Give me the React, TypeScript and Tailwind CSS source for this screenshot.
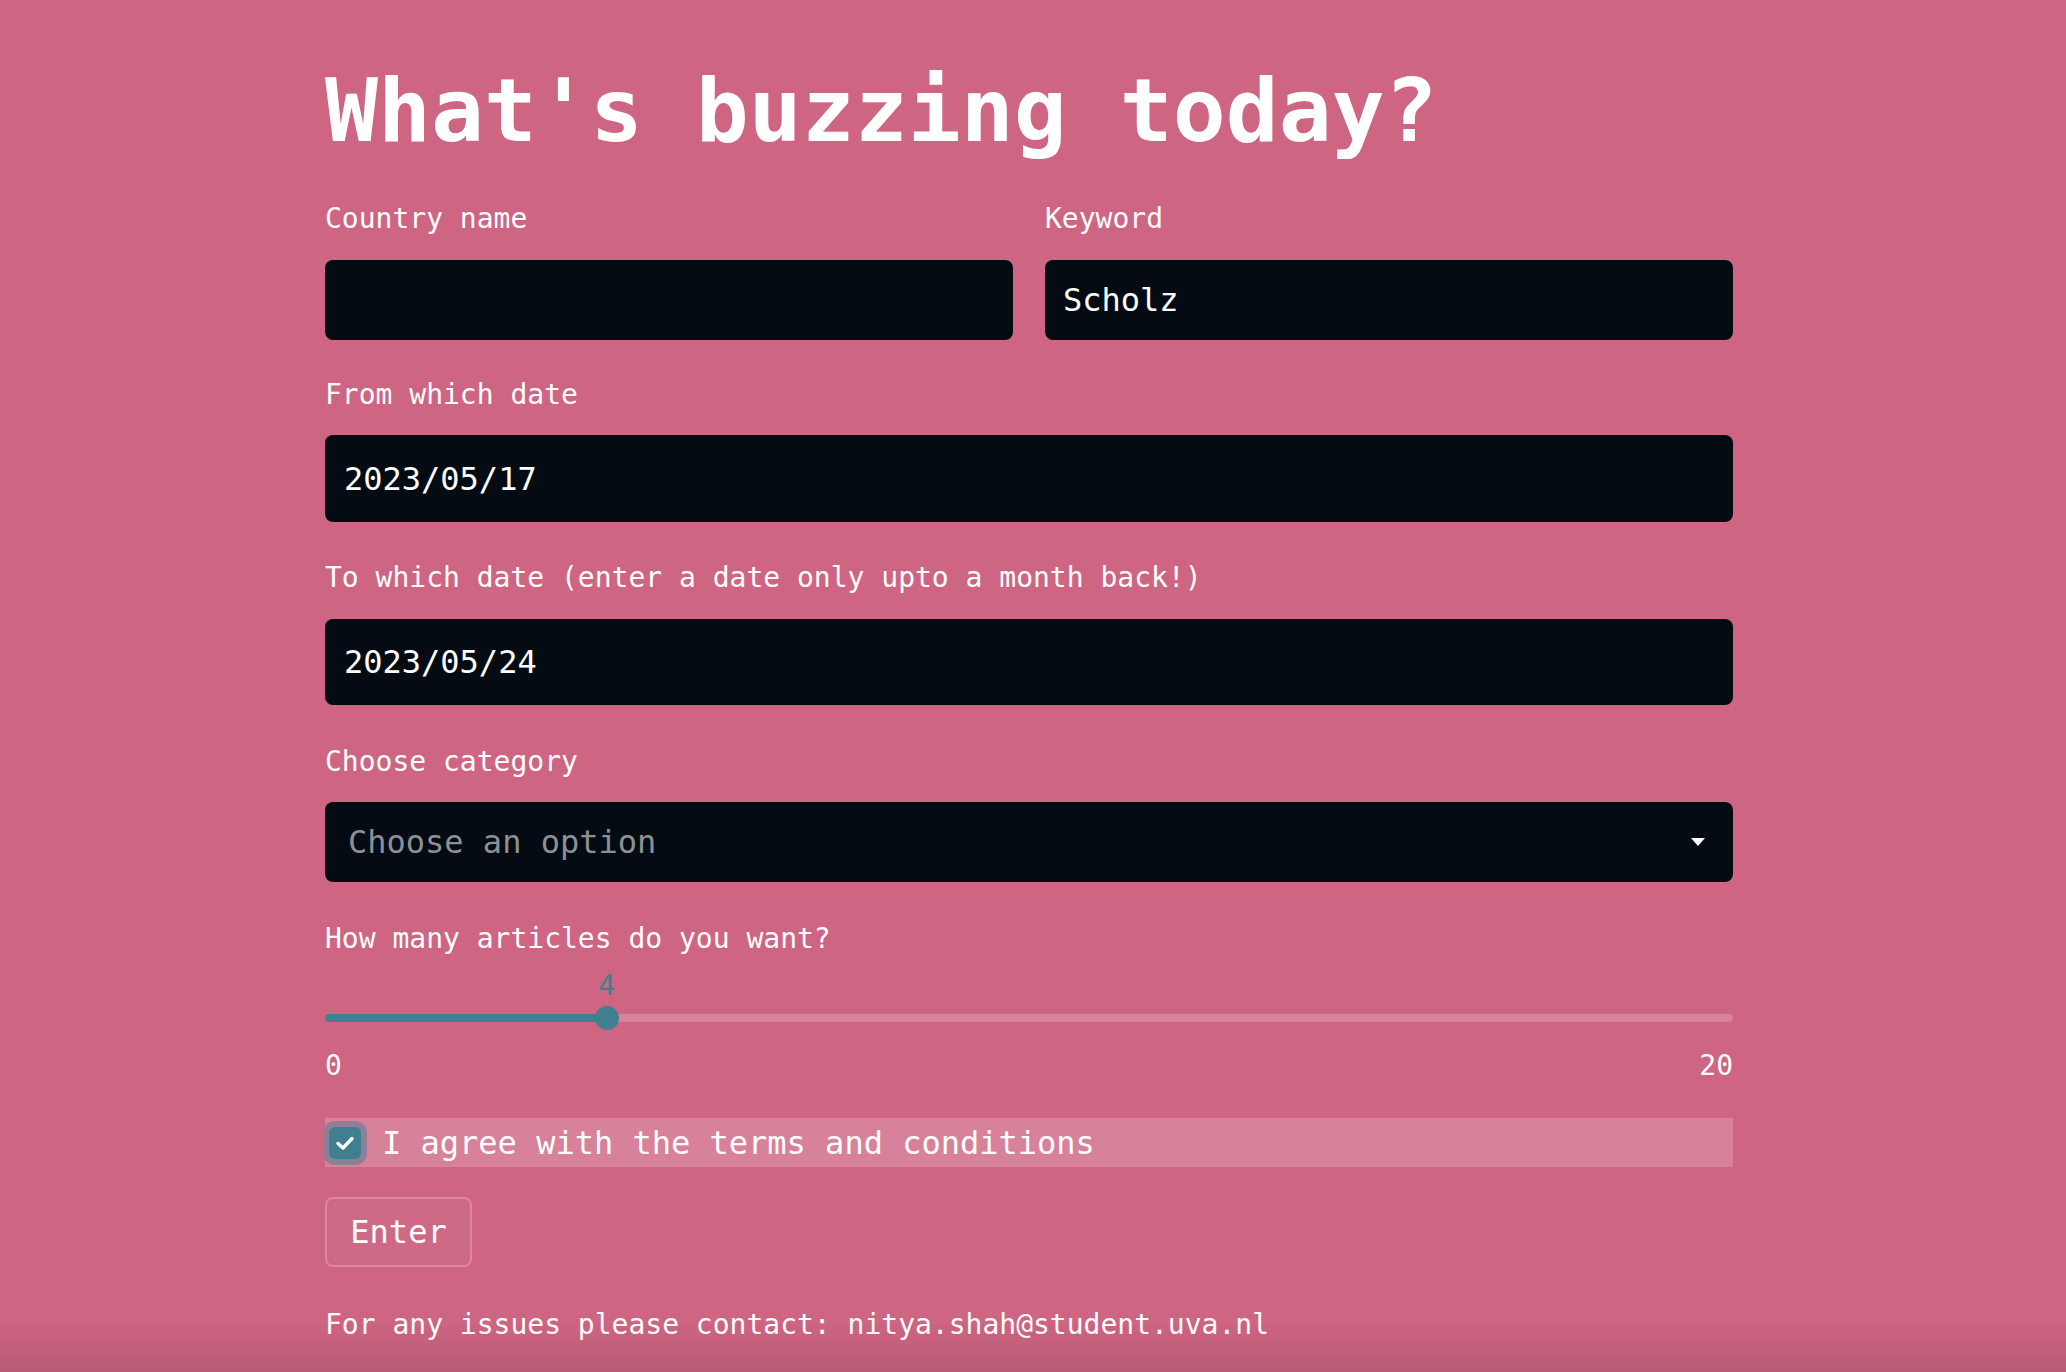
import { useState } from "react";

const mono = { fontFamily: '"DejaVu Sans Mono", "Liberation Mono", monospace' };

const Label = ({ text, className = "" }: { text: string; className?: string }) => (
    <p className={`text-[28px] leading-[40px] text-white ${className}`}>{text}</p>
);

const App = () => {
    const [keyword, setKeyword] = useState<string>("Scholz");
    const [country, setCountry] = useState<string>("");
    const [agree, setAgree] = useState<boolean>(true);
    const articles = 4;
    const pct = (articles / 20) * 100;

    return (
        <div style={mono} className="relative min-h-screen w-full overflow-hidden bg-[#ce6582]">
            <div className="mx-auto flex w-[1408px] flex-col pt-[58px] pb-[40px] -translate-x-[4px]">
                <h1 className="text-[88px] font-bold leading-[106px] text-white">What's buzzing today?</h1>

                {/* country + keyword */}
                <div className="mt-[35px] grid grid-cols-2 gap-[32px]">
                    <div className="flex flex-col gap-[21px]">
                        <Label text="Country name" />
                        <input
                            value={country}
                            onChange={(e) => setCountry(e.target.value)}
                            className="h-[80px] rounded-lg bg-[#040b13] px-[18px] text-[32px] text-white outline-none"
                        />
                    </div>
                    <div className="flex flex-col gap-[21px]">
                        <Label text="Keyword" />
                        <input
                            value={keyword}
                            onChange={(e) => setKeyword(e.target.value)}
                            className="h-[80px] rounded-lg bg-[#040b13] px-[18px] text-[32px] text-white outline-none"
                        />
                    </div>
                </div>

                <Label text="From which date" className="mt-[35px]" />
                <div className="mt-[20px] flex h-[87px] items-center rounded-lg bg-[#040b13] px-[19px] text-[32px] text-white">
                    2023/05/17
                </div>

                <Label text="To which date (enter a date only upto a month back!)" className="mt-[36px]" />
                <div className="mt-[21px] flex h-[86px] items-center rounded-lg bg-[#040b13] px-[19px] text-[32px] text-white">
                    2023/05/24
                </div>

                <Label text="Choose category" className="mt-[37px]" />
                <div className="mt-[20px] flex h-[80px] items-center justify-between rounded-lg bg-[#040b13] pl-[23px] pr-[28px]">
                    <span className="text-[32px] text-[#8d9197]">Choose an option</span>
                    <svg width="14" height="8" viewBox="0 0 14 8">
                        <path d="M0 0 L14 0 L7 8 Z" fill="#ffffff" />
                    </svg>
                </div>

                <Label text="How many articles do you want?" className="mt-[37px]" />

                {/* slider */}
                <div className="relative mt-[7px] h-[40px]">
                    <span
                        className="absolute top-0 -translate-x-1/2 text-[28px] leading-[40px] text-[#3e7f90]"
                        style={{ left: `${pct}%` }}
                    >
                        {articles}
                    </span>
                </div>
                <div className="relative flex h-[24px] items-center">
                    <div className="h-[8px] w-full rounded-full bg-[#d8839b]">
                        <div className="h-full rounded-full bg-[#3e7f90]" style={{ width: `${pct}%` }} />
                    </div>
                    <div
                        className="absolute top-0 h-[24px] w-[24px] -translate-x-1/2 rounded-full bg-[#3e7f90]"
                        style={{ left: `${pct}%` }}
                    />
                </div>
                <div className="mt-[16px] flex justify-between text-[28px] leading-[40px] text-white">
                    <span>0</span>
                    <span>20</span>
                </div>

                {/* terms */}
                <label className="mt-[32px] flex h-[49px] cursor-pointer items-center gap-[21px] bg-[#d8819a] pl-[4px]">
                    <input
                        type="checkbox"
                        checked={agree}
                        onChange={() => setAgree(!agree)}
                        className="peer hidden"
                    />
                    <span className="flex h-[32px] w-[32px] items-center justify-center rounded-md bg-[#3e7f90] ring-[6px] ring-[#8b8097]">
                        {agree ? (
                            <svg width="24" height="24" viewBox="0 0 24 24">
                                <path d="M5 12.5 L10 17 L19 7.5" fill="none" stroke="#ffffff" strokeWidth="3.5" strokeLinecap="round" strokeLinejoin="round" />
                            </svg>
                        ) : null}
                    </span>
                    <span className="text-[32px] text-white">I agree with the terms and conditions</span>
                </label>

                <button className="mt-[30px] h-[70px] w-[147px] rounded-lg border-2 border-[#de879f] bg-[#cf6a86] text-[32px] text-white">
                    Enter
                </button>

                <p className="mt-[38px] text-[28px] leading-[40px] text-white">
                    For any issues please contact: nitya.shah@student.uva.nl
                </p>
            </div>

            <div className="pointer-events-none fixed bottom-0 left-0 h-[50px] w-full bg-gradient-to-b from-transparent to-black/10" />
        </div>
    );
};

export default App;
